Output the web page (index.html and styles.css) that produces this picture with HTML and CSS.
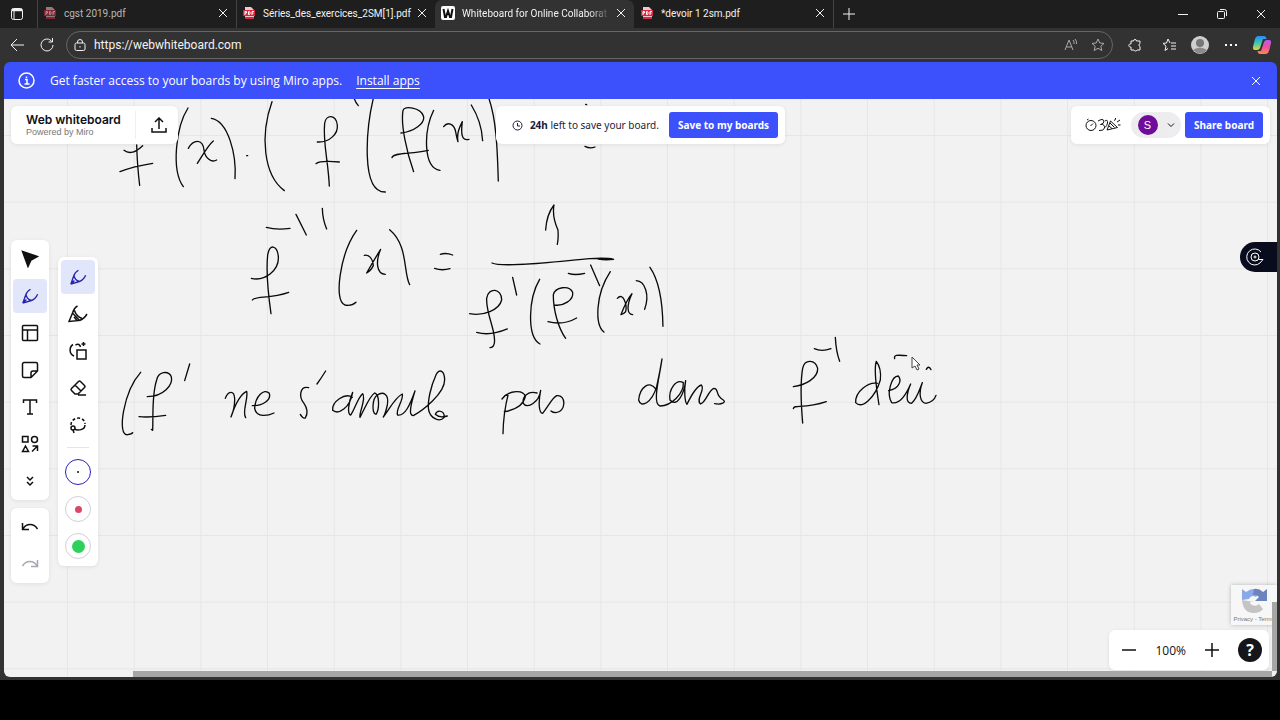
FILE: index.html
```html
<!DOCTYPE html>
<html lang="en">
<head>
  <meta charset="UTF-8">
  <meta name="viewport" content="width=device-width, initial-scale=1.0">
  <title>Whiteboard for Online Collaboration</title>
  <link rel="stylesheet" href="styles.css">
</head>
<body>
  <svg class="defs" width="0" height="0" aria-hidden="true">
    <symbol id="i-close" viewBox="0 0 10 10"><path d="M1 1l8 8M9 1l-8 8"/></symbol>
    <symbol id="i-pdf" viewBox="0 0 14 14"><path fill="#f0c8cc" d="M3 1h6l3 3v9H3z"/><path fill="#d9273f" d="M1 4h12v6H1z"/><path fill="#d9273f" d="M3 11h9v2H3z"/><path stroke="#fff" stroke-width="1" fill="none" d="M3 9V5.500h1.500v1.500H3M6.500 5.500v3h1l.7-1.500-.7-1.500zM10 9V5.500h2M10 7h1.500"/></symbol>
    <symbol id="i-pen" viewBox="0 0 20 20"><path d="M2 18L5 9.500Q6.500 4.500 10.500 2.500M2 18L11.500 15Q16 13.500 18.500 8M5.500 8.500Q6.500 13.500 11.500 15M2 18l4-4"/></symbol>
  </svg>

  <div class="browser">
    <div class="tabs">
      <button class="tabs-menu" aria-label="Tab actions">
        <svg width="14" height="14" viewBox="0 0 14 14"><rect x="1.500" y="1.500" width="11" height="11" rx="2"/><path stroke-width="2.500" d="M2 3h10"/><path d="M4 3v9"/></svg>
      </button>
      <div class="tab tab-dim">
        <svg class="tab-icon" width="14" height="14"><use href="#i-pdf"/></svg>
        <span class="tab-title">cgst 2019.pdf</span>
        <button class="tab-close" aria-label="Close tab"><svg width="10" height="10"><use href="#i-close"/></svg></button>
      </div>
      <div class="tab">
        <svg class="tab-icon" width="14" height="14"><use href="#i-pdf"/></svg>
        <span class="tab-title">Séries_des_exercices_2SM[1].pdf</span>
        <button class="tab-close" aria-label="Close tab"><svg width="10" height="10"><use href="#i-close"/></svg></button>
      </div>
      <div class="tab tab-active">
        <svg class="tab-icon" width="14" height="14" viewBox="0 0 14 14"><rect width="14" height="14" rx="2" fill="#fff"/><path fill="none" stroke="#111" stroke-width="2" d="M2.500 3l1.500 8h1l2-6 2 6h1l1.500-8"/></svg>
        <span class="tab-title">Whiteboard for Online Collaborat</span>
        <button class="tab-close" aria-label="Close tab"><svg width="10" height="10"><use href="#i-close"/></svg></button>
      </div>
      <div class="tab">
        <svg class="tab-icon" width="14" height="14"><use href="#i-pdf"/></svg>
        <span class="tab-title">*devoir 1 2sm.pdf</span>
        <button class="tab-close" aria-label="Close tab"><svg width="10" height="10"><use href="#i-close"/></svg></button>
      </div>
      <button class="tab-new" aria-label="New tab"><svg width="12" height="12" viewBox="0 0 12 12"><path d="M6 0v12M0 6h12"/></svg></button>
      <div class="win-buttons">
        <button aria-label="Minimize"><svg width="10" height="10" viewBox="0 0 10 10"><path d="M0 5.500h10"/></svg></button>
        <button aria-label="Restore"><svg width="10" height="10" viewBox="0 0 10 10"><rect x=".5" y="2.500" width="7" height="7" rx="1"/><path d="M3 .5h4.500a2 2 0 0 1 2 2V7"/></svg></button>
        <button aria-label="Close"><svg width="10" height="10"><use href="#i-close"/></svg></button>
      </div>
    </div>

    <div class="toolbar">
      <button class="nav-btn" aria-label="Back"><svg width="14" height="14" viewBox="0 0 14 14"><path d="M14 7H1M7 1L1 7l6 6"/></svg></button>
      <button class="nav-btn" aria-label="Reload"><svg width="14" height="14" viewBox="0 0 14 14"><path d="M13 7a6 6 0 1 1-2-4.500L12.500 4M12.500 0v4h-4"/></svg></button>
      <div class="address">
        <svg width="12" height="12" viewBox="0 0 12 12"><rect x="1" y="4" width="10" height="7.500" rx="1.500"/><path d="M3.500 4V3a2.500 2.500 0 0 1 5 0v1M6 7v1.500"/></svg>
        <input class="address-input" type="text" aria-label="Address" value="https://webwhiteboard.com">
        <button class="address-btn" aria-label="Read aloud"><svg width="14" height="14" viewBox="0 0 14 14"><path d="M1 12L5 2l4 10M2.500 9h5M9 2q1.500 1.500 1 4M11 1q2 2 1.500 5"/></svg></button>
        <button class="address-btn" aria-label="Add to favorites"><svg width="14" height="14" viewBox="0 0 14 14"><path d="M7 1l1.800 4 4.200.4-3.200 2.900 1 4.200L7 10.300l-3.800 2.200 1-4.200L1 5.400 5.200 5z"/></svg></button>
      </div>
      <div class="toolbar-end">
        <button aria-label="Extensions"><svg width="14" height="14" viewBox="0 0 14 14"><path d="M3 3h2.500a1.500 1.500 0 0 1 3 0H12v2.500a1.600 1.600 0 0 0 0 3V12H9a1.600 1.600 0 0 1-3 0H3V9a1.600 1.600 0 1 1 0-3z"/></svg></button>
        <button aria-label="Favorites"><svg width="14" height="14" viewBox="0 0 14 14"><path d="M8 5L6 1 4.500 5 1 5.400l3 2.700L3 12.500l3-2M9 5h5M9 8h5M9 11h5"/></svg></button>
        <button aria-label="Profile"><svg width="20" height="20" viewBox="0 0 20 20"><circle cx="10" cy="10" r="9" fill="#cfcfcf" stroke="none"/><circle cx="10" cy="8" r="4" fill="#777" stroke="none"/><path d="M3 15q7-5 14 0-6 7-14 0z" fill="#8a8a8a" stroke="none"/></svg></button>
        <button aria-label="Settings and more"><svg width="12" height="4" viewBox="0 0 12 4"><path fill="#fff" stroke="none" d="M0 1h2v2H0zM5 1h2v2H5zM10 1h2v2h-2z"/></svg></button>
        <button aria-label="Copilot"><svg width="20" height="20" viewBox="0 0 20 20">
          <defs>
            <linearGradient id="cp-a" x1="0" y1="0" x2="0" y2="1"><stop offset="0" stop-color="#2a8bf5"/><stop offset=".5" stop-color="#3cc8b0"/><stop offset="1" stop-color="#e8d43c"/></linearGradient>
            <linearGradient id="cp-b" x1="0" y1="0" x2="0" y2="1"><stop offset="0" stop-color="#b35cf0"/><stop offset=".5" stop-color="#f0509a"/><stop offset="1" stop-color="#f78a4a"/></linearGradient>
          </defs>
          <path fill="url(#cp-a)" stroke="none" d="M6 1h6q2 0 2.500 3H11l-3 9q-.6 2-3 2H3q-2.500 0-2-3L3 4q.8-3 3-3z"/>
          <path fill="url(#cp-b)" stroke="none" d="M14 19H8q-2 0-2.500-3H9l3-9q.6-2 3-2h2q2.500 0 2 3l-2 8q-.8 3-3 3z"/>
        </svg></button>
      </div>
    </div>

    <div class="page">
      <div class="banner">
        <svg width="17" height="17" viewBox="0 0 17 17"><circle cx="8.500" cy="8.500" r="7.500"/><path d="M7 7.500h2V12M6.500 12h5M8.500 4.500v1.500"/></svg>
        <span>Get faster access to your boards by using Miro apps.</span>
        <a href="#install">Install apps</a>
        <button class="banner-close" aria-label="Dismiss"><svg width="10" height="10"><use href="#i-close"/></svg></button>
      </div>

      <main class="board">
        <svg class="canvas" width="100%" height="100%">
          <defs>
            <pattern id="grid" x="63" y="36" width="66.67" height="66.67" patternUnits="userSpaceOnUse"><path d="M.5 67V.5H67" fill="none" stroke="#e6e6e6"/></pattern>
          </defs>
          <rect width="100%" height="100%" fill="url(#grid)"/>
          <!-- ink, one group per area of the board -->
          <g class="ink">
            <g transform="translate(96 -4) scale(.3333)">
              <path d="M72 166Q95 184 128 152M110 150Q112 215 119 271M60 230Q100 214 158 205"/>
              <path d="M264 39C228 95 213 225 250 275M265 160C280 133 308 130 312 165C315 190 335 204 350 195M340 138C325 150 308 180 292 205M334 70C385 78 410 180 405 251M440 182l3 0"/>
              <path d="M516 20C480 120 490 240 553 287M652 141C690 143 715 115 712 90C708 58 678 57 674 85C668 140 685 200 688 273M648 206Q660 196 718 201"/>
              <path d="M762 8Q766 22 775 32M820 10C800 95 780 292 856 291M903 114C940 110 978 85 970 62C962 38 912 30 909 47C902 90 920 170 941 230M876 188C880 172 930 178 985 166"/>
              <path d="M1001 46C970 110 970 220 1020 226M1031 95C1042 80 1062 85 1067 110Q1071 132 1074 140C1070 115 1078 98 1087 80C1082 120 1086 138 1107 133M1114 30Q1145 80 1148 137M1166 8C1188 70 1192 150 1195 258"/>
              <path d="M1455 154q15 8 30 2M1457 28l3 1"/>
            </g>
            <g transform="translate(226 96) scale(.3333)">
              <path d="M109 97Q140 106 180 100M198 58L229 120M277 40Q278 75 290 102M64 250C105 260 148 225 145 185C142 150 118 145 113 180C107 240 115 300 123 356M67 315C75 302 120 312 176 292"/>
              <path d="M380 106C330 175 310 320 345 330Q365 334 378 322M403 181C415 178 428 188 430 212Q422 228 410 234Q432 195 452 163C436 200 440 238 466 238M479 104C535 150 520 235 539 269M631 178Q648 172 668 180M614 220Q635 228 660 221"/>
              <path d="M947 105Q950 58 972 30Q966 65 984 105Q986 130 982 148M786 204C820 220 1010 196 1080 191Q1130 188 1151 193Q1125 196 1105 192"/>
              <path d="M719 356C760 364 808 345 815 315C816 280 775 275 770 310C768 360 800 410 793 445Q790 458 780 458M740 412Q780 424 832 402M848 247L860 300"/>
              <path d="M929 253C895 310 890 425 930 447M972 330C1000 335 1032 315 1028 292C1018 270 975 275 970 300C970 345 985 400 1007 430M954 380Q1000 392 1040 369M1015 235Q1035 242 1064 235M1082 210L1109 272M1141 230C1095 300 1095 390 1122 411M1162 310C1180 290 1192 330 1187 350Q1179 358 1173 359Q1190 315 1206 296C1190 330 1190 358 1208 359M1219 257C1245 258 1260 300 1244 343M1260 217C1290 260 1298 330 1299 394"/>
            </g>
            <g transform="translate(96 256) scale(.3333)">
              <path d="M122 52C70 110 50 245 83 239Q95 238 98 233M142 125C190 125 220 90 214 65C205 45 175 50 170 75C155 120 160 180 158 226Q155 225 154 223M117 185Q150 188 197 181M269 27Q262 50 254 77"/>
              <path d="M376 130C384 108 402 105 404 130Q405 160 393 186C405 150 420 118 440 109C446 130 425 170 437 188M457 152C490 152 514 135 508 115C492 98 466 125 464 160C470 190 505 182 522 174"/>
              <path d="M626 98C600 92 595 125 612 145Q628 168 616 189Q608 191 601 178M677 48Q662 72 651 87"/>
              <path d="M757 127C735 112 695 140 698 166C715 180 750 160 758 112C744 145 742 178 752 180C764 165 772 130 788 116C800 130 776 175 780 187C795 160 808 124 824 114C840 120 838 165 828 178C815 178 816 130 832 120C850 108 868 118 862 150Q856 178 850 186C870 160 885 128 907 117C912 135 885 165 893 180C915 184 930 150 945 108C932 150 925 182 940 182C970 165 1034 115 1034 75C1034 48 1018 38 1008 60C992 95 982 140 986 165C992 192 1020 202 1032 188C1036 170 1014 160 1006 178Q1018 190 1042 183"/>
            </g>
            <g transform="translate(456 236) scale(.3333)">
              <path d="M126 192C150 162 192 165 196 185C190 210 165 225 133 230M145 176Q130 235 129 296M231 174C204 166 186 185 190 205C202 225 238 200 242 166C235 200 236 235 248 235C265 215 275 190 290 182C320 178 318 232 288 233Q278 233 273 228"/>
              <path d="M587 162C570 135 540 155 536 195C542 220 575 205 590 155Q600 110 606 72C600 120 575 208 600 213C635 212 672 175 670 143C648 130 625 165 630 195C650 218 672 180 677 137C672 165 674 200 681 208C692 185 708 155 724 150C738 162 705 195 722 207C740 200 745 165 762 160C778 160 764 182 790 195C800 202 785 210 764 206"/>
            </g>
            <g transform="translate(736 231) scale(.3333)">
              <path d="M160 170C195 165 235 145 233 115C226 90 195 85 188 115C180 160 183 220 188 279M160 236C162 222 190 238 259 215M223 56Q245 66 273 56M286 22Q288 65 299 94"/>
              <path d="M412 160C385 155 345 185 347 218C365 238 405 205 421 150Q425 115 409 94C400 120 410 180 417 224M446 182C480 175 485 150 475 138C455 138 438 190 455 218C480 224 500 190 512 162C500 190 495 220 515 220C532 205 538 180 547 158C535 190 540 218 558 220Q582 215 588 196M464 86C460 72 480 76 500 77M559 118Q566 105 573 119"/>
            </g>
          </g>
          <path class="pointer" d="M908 258v11l3-2 2 4 2-1-2-4h3z"/>
        </svg>

        <div class="top-row">
          <header class="panel title-panel">
            <div>
              <h1>Web whiteboard</h1>
              <p>Powered by Miro</p>
            </div>
            <button class="export-btn" aria-label="Export"><svg width="16" height="16" viewBox="0 0 16 16"><path d="M8 12V1M4 5l4-4 4 4M1 11v4h14v-4"/></svg></button>
          </header>
          <div class="panel save-panel">
            <svg width="11" height="11" viewBox="0 0 11 11"><circle cx="5.500" cy="5.500" r="4.500"/><path d="M5.500 3v3H8"/></svg>
            <span><b>24h</b> left to save your board.</span>
            <button class="primary">Save to my boards</button>
          </div>
          <div class="panel share-panel">
            <button class="facilitation" aria-label="Facilitation tools"><svg width="36" height="16" viewBox="0 0 36 16"><circle cx="6" cy="8.500" r="5"/><path d="M5.500 9L8 6.500M2 3l1.500-1M13 4q5-3 6 0 0 3-3.500 3.500 4.500-.5 4 3.500-.8 3-5.500 2.500M20 4q3-2 2.500 2-.5 3-2.500 4.500M22 13l3.500-9 7 6.500zM24 9l3 2.500M25 6l4.500 4.500M29 3.500q2-.5 1.500-2.500M32 5l3-2M33 8h2.500"/></svg></button>
            <button class="user-menu" aria-label="Account menu">
              <span class="avatar">S</span>
              <svg width="8" height="5" viewBox="0 0 8 5"><path d="M1 .5l3 3 3-3"/></svg>
            </button>
            <button class="primary">Share board</button>
          </div>
        </div>

        <div class="tools-row">
          <div class="tools-col">
            <nav class="panel tools" aria-label="Tools">
              <button aria-label="Select"><svg width="18" height="18" viewBox="0 0 18 18"><path fill="#111" d="M1.500 1.500l15 5-6.500 3.500-3 6.500z"/></svg></button>
              <button class="selected" aria-label="Pen"><svg width="18" height="18"><use href="#i-pen"/></svg></button>
              <button aria-label="Templates"><svg width="18" height="18" viewBox="0 0 18 18"><rect x="1.500" y="1.500" width="15" height="15" rx="1"/><path d="M1.500 6h15M6.500 6v10.500"/></svg></button>
              <button aria-label="Sticky note"><svg width="18" height="18" viewBox="0 0 18 18"><path d="M3 1.500h12a1.500 1.500 0 0 1 1.500 1.500v7L10 16.500H3A1.500 1.500 0 0 1 1.500 15V3A1.500 1.500 0 0 1 3 1.500zM10 16V12q0-2 2-2h4"/></svg></button>
              <button aria-label="Text"><svg width="18" height="18" viewBox="0 0 18 18"><path d="M2.500 5V2h13v3M9 2v14M6 16h6"/></svg></button>
              <button aria-label="Shapes"><svg width="18" height="18" viewBox="0 0 18 18"><path d="M1.500 1.500h5.500v5.500H1.500zM4.500 11l3 5.500h-6zM11 16.500l5.500-5.500M11.500 11h5v5"/><circle cx="13.500" cy="4.500" r="3"/></svg></button>
              <button aria-label="More"><svg width="18" height="18" viewBox="0 0 18 18"><path d="M6 5l3 3 3-3M6 10l3 3 3-3"/></svg></button>
            </nav>
            <div class="panel tools">
              <button aria-label="Undo"><svg width="18" height="18" viewBox="0 0 18 18"><path d="M1.500 5v6.500H8M2 11C5 5 13 5 16.500 11"/></svg></button>
              <button class="disabled" aria-label="Redo" disabled><svg width="18" height="18" viewBox="0 0 18 18"><path d="M16.500 5v6.500H10M16 11C13 5 5 5 1.500 11"/></svg></button>
            </div>
          </div>
          <div class="panel tools pens">
            <button class="selected" aria-label="Pen"><svg width="18" height="18"><use href="#i-pen"/></svg></button>
            <button aria-label="Highlighter"><svg width="20" height="18" viewBox="0 0 20 18"><path d="M1 16.500L4.500 8l7 7.500zM6 12l3.500 4M4.500 8Q6 3 9.500 1M11.500 15.500Q16 14 19 9M6.500 5.500Q8 11 14 13.500"/></svg></button>
            <button aria-label="Smart drawing"><svg width="18" height="18" viewBox="0 0 18 18"><rect x="8" y="8" width="9" height="9"/><path d="M5 14C0 12 0 5 4 2.500M6.500 3q4-2 5 2M14.500 0v4M12.500 2h4"/></svg></button>
            <button aria-label="Eraser"><svg width="18" height="18" viewBox="0 0 18 18"><path d="M11.500 2.500l4 4q1 1 0 2L9 15H6l-3.500-3.500q-1-1 0-2l7-7q1-1 2 0zM6 6l6 6M9 16h8"/></svg></button>
            <button aria-label="Lasso"><svg width="18" height="18" viewBox="0 0 18 18"><path stroke-dasharray="3 2" d="M2 9c0-9 14-9 14-1"/><path d="M16 9c0 5-7 6-11 4"/><circle cx="4" cy="12" r="2"/><path d="M4 14l1 3"/></svg></button>
            <hr>
            <button class="swatch swatch-current" aria-label="Black, thin"><span class="dot dot-black"></span></button>
            <button class="swatch" aria-label="Red, medium"><span class="dot dot-red"></span></button>
            <button class="swatch" aria-label="Green, thick"><span class="dot dot-green"></span></button>
          </div>
        </div>

        <button class="side-tab" aria-label="Open assistant"><svg width="20" height="20" viewBox="0 0 20 20"><path d="M16 5A8 8 0 1 0 15 16L18 12.500H13.500"/><circle cx="10" cy="10" r="4"/><circle cx="10" cy="10" r="1"/></svg></button>

        <div class="captcha">
          <svg width="28" height="28" viewBox="0 0 28 28"><path fill="#8aa9e8" d="M2 13V2l4 3q8-6 14 0l-4 5q-5-3-7 2z"/><path fill="#6c84bd" d="M27 2v12H15l4-4q-3-3-6-2l1-6q5-1 9 3z"/><path fill="#c4c4c4" d="M2 13q1 13 12 13 6 0 9-4l-4-5q-3 3-7 1-2-1-2-3h4z"/></svg>
          <span>Privacy - Terms</span>
        </div>

        <div class="panel zoom">
          <button aria-label="Zoom out"><svg width="14" height="14" viewBox="0 0 14 14"><path d="M0 7h14"/></svg></button>
          <span>100%</span>
          <button aria-label="Zoom in"><svg width="14" height="14" viewBox="0 0 14 14"><path d="M7 0v14M0 7h14"/></svg></button>
          <button class="help" aria-label="Help">?</button>
        </div>
        <div class="scroll-x"></div>
        <div class="scroll-y"></div>
      </main>
    </div>
  </div>
</body>
</html>
```
FILE: styles.css
```css
:root {
  --blue: #3c50fb;
  --selected: #e2e6fb;
  --ink: #101014;
  --chrome: #323232;
}

* {
  box-sizing: border-box;
  margin: 0;
  padding: 0;
}

body {
  height: 100vh;
  padding-bottom: 40px;
  background: #000;
  font-family: "Open Sans", "Noto Sans", sans-serif;
  color: var(--ink);
  overflow: hidden;
}

button {
  display: flex;
  align-items: center;
  justify-content: center;
  flex: none;
  border: none;
  background: none;
  color: inherit;
  font: inherit;
  cursor: pointer;
}

svg {
  flex: none;
  fill: none;
  stroke: currentColor;
}

.defs {
  position: absolute;
}

.browser {
  height: 100%;
  display: flex;
  flex-direction: column;
  background: var(--chrome);
  color: #f2f2f2;
}

/* Tab strip */
.tabs {
  display: flex;
  height: 28px;
  background: #1e1e1e;
}

.tabs-menu {
  width: 37px;
  padding-right: 4px;
}

.tab {
  flex: 0 1 199px;
  min-width: 0;
  display: flex;
  align-items: center;
  padding: 0 8px 2px 5px;
  border-left: 1px solid #444;
  font-family: Roboto, sans-serif;
  font-size: 10px;
}

.tab-active {
  background: var(--chrome);
  border-color: transparent;
  border-radius: 7px 7px 0 0;
}

.tab-active + .tab {
  border-color: transparent;
}

.tab-icon {
  stroke: none;
}

.tab-title {
  flex: 1;
  margin: 0 5px 0 7px;
  overflow: hidden;
  white-space: nowrap;
}

.tab-dim .tab-icon {
  opacity: .55;
}

.tab-dim .tab-title {
  color: #b8b8b8;
}

.tab-active .tab-title {
  -webkit-mask-image: linear-gradient(to right, #000 85%, transparent);
  mask-image: linear-gradient(to right, #000 85%, transparent);
}

.tab-new {
  width: 30px;
  border-left: 1px solid #444;
}

.win-buttons {
  display: flex;
  margin-left: auto;
}

.win-buttons button {
  width: 39px;
}

/* Address row */
.toolbar {
  display: flex;
  align-items: center;
  height: 34px;
  padding: 0 3px 0 2px;
}

.nav-btn {
  width: 30px;
}

.address {
  flex: 1;
  display: flex;
  align-items: center;
  height: 28px;
  margin: 0 6px 0 4px;
  padding: 0 1px 0 7px;
  border: 1px solid #666;
  border-radius: 14px;
}

.address-input {
  flex: 1;
  min-width: 0;
  margin-left: 8px;
  border: none;
  outline: none;
  background: none;
  color: #f2f2f2;
  font-family: Roboto, sans-serif;
  font-size: 12px;
}

.address-btn {
  width: 27px;
  color: #aaa;
}

.toolbar-end {
  display: flex;
}

.toolbar-end button {
  width: 31px;
}

.toolbar-end button:first-child {
  margin-right: 3px;
}

/* Web page */
.page {
  flex: 1;
  display: flex;
  flex-direction: column;
  min-height: 0;
  margin: 0 3px 3px 4px;
  border-radius: 6px;
  overflow: hidden;
}

.banner {
  display: flex;
  align-items: center;
  height: 37px;
  padding: 0 11px 0 14px;
  background: var(--blue);
  color: #fff;
  font-size: 12px;
}

.banner span {
  margin: 0 14px 0 15px;
}

.banner a {
  color: #fff;
  text-underline-offset: 3px;
}

.banner svg {
  stroke-width: 1.500;
}

.banner .banner-close svg {
  stroke-width: 1;
}

.banner-close {
  width: 20px;
  height: 20px;
  margin-left: auto;
}

.board {
  position: relative;
  flex: 1;
  min-height: 0;
  padding: 7px;
  background: #f2f2f2;
  color: var(--ink);
}

.canvas {
  position: absolute;
  inset: 0;
  stroke: none;
}

.ink {
  fill: none;
  stroke: #0a0a0a;
  stroke-width: 4;
  stroke-linecap: round;
  stroke-linejoin: round;
}

.pointer {
  fill: #fff;
  stroke: #444;
}

.panel {
  background: #fff;
  border-radius: 6px;
  box-shadow: 0 1px 4px rgba(0, 0, 0, .08);
}

.top-row {
  position: relative;
  display: grid;
  grid-template-columns: 1fr auto 1fr;
}

.top-row .panel {
  display: flex;
  align-items: center;
  height: 38px;
}

.title-panel {
  justify-self: start;
  padding-left: 15px;
}

.title-panel h1 {
  font-family: "Inter", sans-serif;
  font-size: 12px;
  line-height: 14px;
  font-weight: 600;
}

.title-panel p {
  font-family: "Liberation Sans", sans-serif;
  font-size: 9px;
  line-height: 11px;
  color: #777;
}

.export-btn {
  width: 43px;
  height: 28px;
  padding-left: 5px;
  margin-left: 14px;
  border-left: 1px solid #f0f0f0;
}

.export-btn svg {
  stroke-width: 1.500;
}

.save-panel {
  gap: 7px;
  padding: 0 7px 0 16px;
  font-family: "Noto Sans", sans-serif;
  font-size: 10px;
  color: #1c1c3a;
}

.primary {
  height: 26px;
  padding: 0 9px;
  border-radius: 3px;
  background: var(--blue);
  color: #fff;
  font-family: "Noto Sans", sans-serif;
  font-size: 10px;
  font-weight: 700;
}

.save-panel .primary {
  margin-left: 3px;
}

.share-panel {
  justify-self: end;
  padding: 0 7px 0 14px;
}

.user-menu {
  width: 50px;
  height: 26px;
  gap: 9px;
  margin: 0 4px 0 10px;
  border-radius: 13px;
  background: #ededef;
}

.avatar {
  width: 20px;
  height: 20px;
  border-radius: 50%;
  background: #6f0c99;
  color: #fff;
  font-family: "Liberation Sans", sans-serif;
  font-size: 11px;
  line-height: 20px;
}

/* Tool bars */
.tools-row {
  position: relative;
  display: flex;
  align-items: flex-start;
  gap: 9px;
  margin-top: 96px;
}

.tools-col {
  display: flex;
  flex-direction: column;
  gap: 8px;
}

.tools {
  display: flex;
  flex-direction: column;
  gap: 3px;
  padding: 2px;
  width: 38px;
}

.tools button {
  width: 34px;
  height: 34px;
  border-radius: 4px;
}

.tools svg {
  stroke-width: 1.500;
}

.tools .selected {
  background: var(--selected);
  color: #2424a8;
}

.tools .disabled {
  color: #a8a8b4;
}

.pens {
  width: 40px;
  padding: 3px;
  margin-top: 17px;
}

.pens hr {
  width: 22px;
  margin: 2px auto 4px;
  border: none;
  border-top: 1px solid #e4e4e4;
}

.tools .swatch {
  width: 26px;
  height: 26px;
  margin: 4px;
  border: 1px solid #d0d0d8;
  border-radius: 50%;
}

.tools .swatch-current {
  border-color: #2a20b8;
}

.dot {
  border-radius: 50%;
}

.dot-black {
  width: 2px;
  height: 2px;
  background: #111;
}

.dot-red {
  width: 7px;
  height: 7px;
  background: #dc4664;
}

.dot-green {
  width: 13px;
  height: 13px;
  background: #2fd05c;
}

/* Things pinned to the board edges */
.side-tab {
  position: absolute;
  top: 143px;
  right: 0;
  width: 37px;
  height: 30px;
  padding-right: 7px;
  border-radius: 15px 0 0 15px;
  background: #090c1c;
  color: #fff;
}

.captcha {
  position: absolute;
  right: 0;
  bottom: 52px;
  width: 46px;
  height: 40px;
  display: flex;
  flex-direction: column;
  align-items: center;
  justify-content: center;
  overflow: hidden;
  background: #f7f7f7;
  box-shadow: 0 0 4px rgba(0, 0, 0, .25);
}

.captcha svg {
  stroke: none;
}

.captcha span {
  color: #777;
  font-family: "Liberation Sans", sans-serif;
  font-size: 6px;
  line-height: 8px;
  white-space: nowrap;
}

.zoom {
  position: absolute;
  right: 8px;
  bottom: 7px;
  display: flex;
  align-items: center;
  gap: 15px;
  height: 40px;
  padding: 0 7px 0 13px;
  font-size: 12px;
}

.zoom svg {
  stroke-width: 1.500;
}

.zoom span {
  margin: 0 4px;
}

.zoom .help {
  width: 24px;
  height: 24px;
  margin-left: 4px;
  border-radius: 50%;
  background: #16161a;
  color: #fff;
  font-size: 16px;
  font-weight: 700;
}

.scroll-x {
  position: absolute;
  left: 129px;
  right: 5px;
  bottom: 0;
  height: 6px;
  background: #a6a6a6;
}

.scroll-y {
  position: absolute;
  right: 0;
  bottom: 6px;
  width: 5px;
  height: 69px;
  background: #a6a6a6;
}
```
